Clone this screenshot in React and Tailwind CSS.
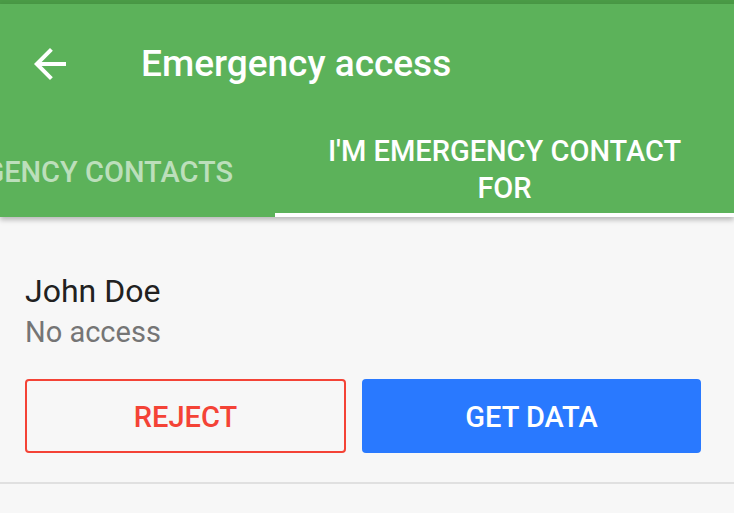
import React from "react";

function App() {
  return (
    <div className="w-[734px] h-[513px] overflow-hidden bg-[#f7f7f7]" style={{ fontFamily: "Roboto, 'Noto Sans', sans-serif" }}>
      <div className="h-[4px] bg-[#4a9a46]" />
      <div className="relative z-10 bg-[#5cb25a] shadow-[0_3px_5px_rgba(0,0,0,0.25)]">
        <div className="h-[120px] flex items-center">
          <div className="w-[141px] pl-[26px] flex items-center">
            <svg width="48" height="48" viewBox="0 0 24 24" fill="white">
              <path d="M20 11H7.83l5.59-5.59L12 4l-8 8 8 8 1.41-1.41L7.83 13H20v-2z" />
            </svg>
          </div>
          <h1 className="text-[37px] font-medium text-white">Emergency access</h1>
        </div>
        <div className="h-[93px] flex overflow-hidden">
          <div className="w-[409px] ml-[-134px] shrink-0 flex items-center justify-center pt-[2px]">
            <span className="text-[29px] font-medium text-white/60 leading-[36px] whitespace-nowrap">EMERGENCY CONTACTS</span>
          </div>
          <div className="w-[459px] shrink-0 flex flex-col">
            <div className="flex-1 flex items-center justify-center text-center px-[40px] pt-[2px]">
              <span className="text-[29px] font-medium text-white leading-[37px]">I'M EMERGENCY CONTACT FOR</span>
            </div>
            <div className="h-[4px] bg-white" />
          </div>
        </div>
      </div>
      <div className="px-[25px] pt-[54px] pb-[29px] border-b-2 border-[#e0e0e0]">
        <div className="text-[32px] text-[#212121] leading-[40px]">John Doe</div>
        <div className="text-[29px] text-[#757575] leading-[36px] mt-[3px]">No access</div>
        <div className="mt-[29px] flex gap-[16px] pr-[8px]">
          <button className="w-[321px] h-[74px] pt-[3px] border-2 border-[#f44336] rounded-[4px] text-[#f44336] text-[29px] font-medium">REJECT</button>
          <button className="w-[339px] h-[74px] pt-[4px] bg-[#2979ff] rounded-[4px] text-white text-[29px] font-medium">GET DATA</button>
        </div>
      </div>
    </div>
  );
}

export default App;
